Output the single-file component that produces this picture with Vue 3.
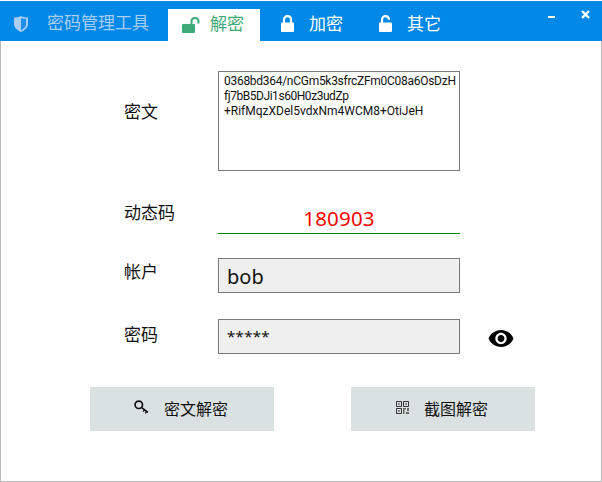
<template>
  <div class="window">
    <header class="titlebar">
      <div class="brand">
        <svg class="shield" viewBox="0 0 14 16" width="14" height="16">
          <path d="M0 1.5 C2.5 1.500 4.500 1 7 0 C9.500 1 11.500 1.500 14 1.500 V8 C14 12 10 14.500 7 16 C4 14.500 0 12 0 8 Z" fill="#a9cdf3" />
          <path d="M7 2 C8.800 2.700 10.500 3 12 3.100 V8 C12 11 9.300 13 7 14.200 Z" fill="#1d8de6" />
        </svg>
        <span class="brand-name">密码管理工具</span>
      </div>

      <nav class="tabs">
        <div class="tab active">
          <svg class="tab-icon" viewBox="0 0 18 16" width="18" height="16">
            <rect x="0" y="7" width="13" height="9" rx="1" fill="#3daa78" />
            <path d="M9.500 7 V4.500 C9.500 2.300 11 1 13 1 C15 1 16.500 2.300 16.500 4.500 V6.500" fill="none" stroke="#3daa78" stroke-width="2" />
          </svg>
          <span>解密</span>
        </div>
        <div class="tab lock">
          <svg class="tab-icon" viewBox="0 0 13 17" width="13" height="17">
            <rect x="0" y="7.500" width="13" height="9.500" rx="1" fill="#fff" />
            <path d="M3 8 V5 C3 2.600 4.400 1.200 6.500 1.200 C8.600 1.200 10 2.600 10 5 V8" fill="none" stroke="#fff" stroke-width="2.200" />
          </svg>
          <span>加密</span>
        </div>
        <div class="tab other">
          <svg class="tab-icon" viewBox="0 0 13 17" width="13" height="17">
            <rect x="0" y="7.500" width="13" height="9.500" rx="1" fill="#fff" />
            <path d="M3 8 V5 C3 2.600 4.400 1.200 6.500 1.200 C8.600 1.200 10 2.600 10 4.800" fill="none" stroke="#fff" stroke-width="2.200" />
          </svg>
          <span>其它</span>
        </div>
      </nav>

      <div class="win-controls">
        <span class="min"></span>
        <svg class="close" viewBox="0 0 9 9" width="9" height="9">
          <path d="M1 1 L8 8 M8 1 L1 8" stroke="#fff" stroke-width="2.400" />
        </svg>
      </div>
    </header>

    <main class="content">
      <div class="row first">
        <label class="label">密文</label>
        <div class="cipher">
          <div v-for="line in cipherLines" :key="line.text" :style="{ letterSpacing: line.spacing }">{{ line.text }}</div>
        </div>
      </div>

      <div class="row code-row">
        <label class="label">动态码</label>
        <div class="code">180903</div>
      </div>

      <div class="row account-row">
        <label class="label">帐户</label>
        <div class="box account">bob</div>
      </div>

      <div class="row password-row">
        <label class="label">密码</label>
        <div class="box password">*****</div>
        <svg class="eye" viewBox="1 4.500 22 15" width="26" height="17">
          <path d="M12 4.500C7 4.500 2.730 7.610 1 12c1.730 4.390 6 7.500 11 7.500s9.270-3.110 11-7.500c-1.730-4.390-6-7.500-11-7.500zM12 17c-2.760 0-5-2.240-5-5s2.240-5 5-5 5 2.240 5 5-2.240 5-5 5zm0-8c-1.660 0-3 1.340-3 3s1.340 3 3 3 3-1.340 3-3-1.340-3-3-3z" fill="#000" />
        </svg>
      </div>

      <div class="actions">
        <button class="action">
          <svg viewBox="0 0 15 15" width="15" height="15">
            <circle cx="4.800" cy="4.800" r="3.700" fill="none" stroke="#111" stroke-width="1.700" />
            <path d="M7.400 7.400 L14 12.400 M10.400 9.800 L9.200 11.600 M12.600 11.400 L11.400 13.400" fill="none" stroke="#111" stroke-width="1.500" />
          </svg>
          <span>密文解密</span>
        </button>
        <button class="action">
          <svg viewBox="0 0 13 13" width="13" height="13">
            <path d="M.5.5h5v5h-5zM7.500.5h5v5h-5zM.5 7.500h5v5h-5z" fill="none" stroke="#333" stroke-width="1" />
            <path d="M2 2h2v2H2zM9 2h2v2H9zM2 9h2v2H2z" fill="#888" />
            <path d="M7 7h3v1.500H8.500V13H7zM11 7h2v3h-2zM10 11h3v2h-3z" fill="#666" />
          </svg>
          <span>截图解密</span>
        </button>
      </div>
    </main>
  </div>
</template>

<script setup>
const cipherLines = [
  { text: '0368bd364/nCGm5k3sfrcZFm0C08a6OsDzH', spacing: '-0.28px' },
  { text: 'fj7bB5DJi1s60H0z3udZp', spacing: '-0.45px' },
  { text: '+RifMqzXDel5vdxNm4WCM8+OtiJeH', spacing: '0' },
]
</script>

<style>
html, body { margin: 0; background: #fff; }
</style>

<style scoped>
.window {
  width: 602px;
  height: 482px;
  box-sizing: border-box;
  padding-top: 1px;
  display: flex;
  flex-direction: column;
  background: #fff;
  font-family: "Noto Sans", "Noto Sans CJK SC", sans-serif;
  color: #111;
  overflow: hidden;
}
.titlebar {
  height: 40px;
  flex: none;
  display: flex;
  align-items: flex-end;
  background: #0288e6;
  color: #fff;
  font-size: 17px;
}
.brand {
  width: 168px;
  height: 32px;
  display: flex;
  align-items: center;
  color: #a9cdf3;
  padding-left: 14px;
  box-sizing: border-box;
}
.shield { margin-right: 20px; margin-top: -3px; flex: none; }
.brand-name { line-height: 28px; margin: 0 0 4px -1px; }
.tabs { display: flex; }
.tab {
  height: 32px;
  box-sizing: border-box;
  display: flex;
  align-items: center;
}
.tab-icon { flex: none; margin-top: -4px; }
.tab span { line-height: 28px; margin-bottom: 2px; }
.tab.active {
  width: 92px;
  padding-left: 14px;
  background: #fff;
  color: #3daa78;
}
.tab.active .tab-icon { margin-top: 0; margin-right: 10px; }
.tab.lock { width: 98px; padding-left: 21px; }
.tab.other { width: 92px; padding-left: 21px; }
.tab.lock .tab-icon, .tab.other .tab-icon { margin-right: 15px; }
.win-controls {
  margin-left: auto;
  align-self: flex-start;
  display: flex;
  padding-top: 9px;
  padding-right: 12px;
}
.min {
  width: 7px;
  height: 2px;
  background: #fff;
  margin-top: 6px;
  margin-right: 26px;
}
.close { display: block; }

.content {
  flex: 1;
  border: 1px solid #b9b9b9;
  border-top: none;
  padding: 30px 0 0 123px;
}
.row { display: flex; align-items: flex-start; }
.label {
  width: 94px;
  flex: none;
  font-size: 17px;
  line-height: 22px;
  color: #111;
}
.first .label { padding-top: 30px; }
.cipher {
  width: 242px;
  height: 100px;
  box-sizing: border-box;
  border: 1px solid #7a7a7a;
  padding: 2px 0 0 5px;
  font-family: Roboto, "Noto Sans", sans-serif;
  font-size: 12px;
  line-height: 15px;
  white-space: nowrap;
}
.code-row { margin-top: 31px; height: 32px; }
.code {
  width: 242px;
  height: 32px;
  box-sizing: border-box;
  border-bottom: 1px solid #008000;
  text-align: center;
  color: #ff0000;
  font-size: 20.500px;
  letter-spacing: 0.2px;
  line-height: 33px;
}
.account-row { margin-top: 24px; }
.account-row .label { padding-top: 3px; }
.password-row { margin-top: 26px; }
.password-row .label { padding-top: 5px; }
.box {
  width: 242px;
  height: 35px;
  box-sizing: border-box;
  border: 1px solid #7a7a7a;
  background: #efefef;
  padding-left: 8px;
}
.account { font-size: 20px; line-height: 36px; }
.password { font-size: 15px; line-height: 32px; letter-spacing: 0.3px; }
.eye { margin: 11px 0 0 28px; }
.actions {
  display: flex;
  gap: 77px;
  margin: 33px 0 0 -34px;
}
.action {
  width: 184px;
  height: 44px;
  border: none;
  padding: 0 2px 3px 0;
  background: #dae2e1;
  display: flex;
  align-items: center;
  justify-content: center;
  gap: 15px;
  font-family: inherit;
  font-size: 16px;
  color: #111;
}
</style>
